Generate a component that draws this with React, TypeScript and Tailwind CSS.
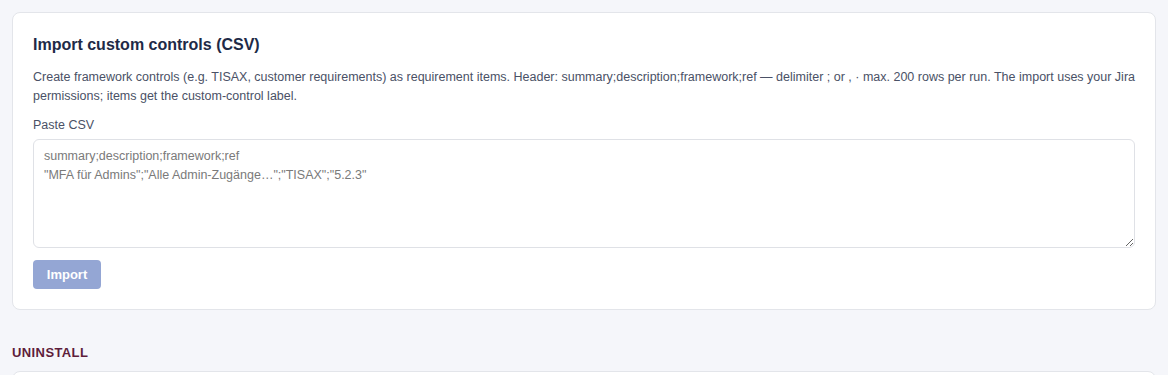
import React, { useState } from 'react';

const font = { fontFamily: '"Liberation Sans", Arial, sans-serif' };

const App: React.FC = () => {
    const [csv, setCsv] = useState<string>('');

    return (
        <div className="min-h-screen bg-[#f5f6fa] p-3" style={font}>
            <div className="rounded-lg border border-[#e3e5ea] bg-white px-5 pt-5 pb-5">
                <h2 className="text-[16px] font-bold leading-6 text-[#1e2a47]">Import custom controls (CSV)</h2>
                <p className="mt-[11px] text-[12.5px] leading-[19px] text-[#4a5166]">
                    Create framework controls (e.g. TISAX, customer requirements) as requirement items. Header:
                    summary;description;framework;ref — delimiter ; or , · max. 200 rows per run. The import uses your
                    Jira permissions; items get the custom-control label.
                </p>
                <label className="mt-[10px] block text-[12.5px] leading-[18px] text-[#4a5166]">Paste CSV</label>
                <textarea
                    value={csv}
                    onChange={(e) => setCsv(e.target.value)}
                    placeholder={'summary;description;framework;ref\n"MFA für Admins";"Alle Admin-Zugänge…";"TISAX";"5.2.3"'}
                    className="mt-[5px] block h-[109px] w-full rounded-md border border-[#dfe1e6] bg-white px-[10px] py-[7px] text-[12.5px] leading-[19px] text-[#333] placeholder:text-[#7a7a7a] outline-none"
                    style={font}
                />
                <button
                    disabled={csv.length === 0}
                    className="mt-[12px] h-[29px] w-[68px] rounded bg-[#94a6d4] text-[13px] font-bold text-white"
                >
                    Import
                </button>
            </div>

            <h3 className="mt-[35px] text-[13px] font-bold leading-4 tracking-[0.4px] text-[#5e1d3b]">UNINSTALL</h3>
            <div className="mt-[10px] h-10 rounded-lg border border-[#e3e5ea] bg-white" />
        </div>
    );
};

export default App;
